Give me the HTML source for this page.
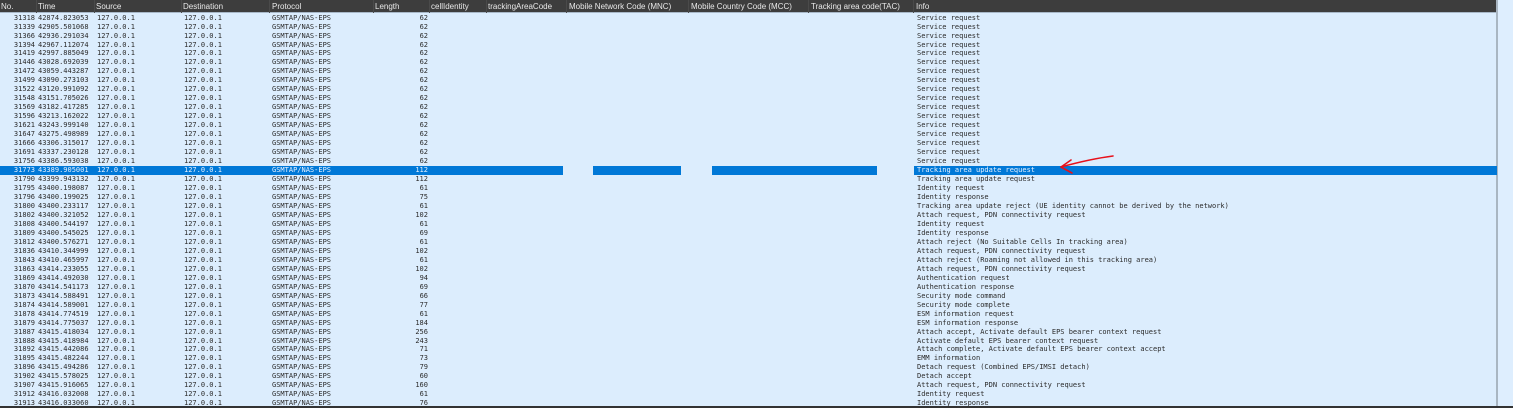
<!DOCTYPE html>
<html><head><meta charset="utf-8"><style>
*{margin:0;padding:0;box-sizing:border-box}
body{width:1513px;height:408px;overflow:hidden;background:#dcedfd;position:relative;font-family:"DejaVu Sans Mono","Liberation Mono",monospace;}
#hd{position:absolute;left:0;top:0;width:1497px;height:13px;background:#3d3d3d;border-bottom:1px solid #a8b8c8;font-family:"Liberation Sans",sans-serif;font-size:8px;color:#e8e8e8}
#hd span{position:absolute;top:2px;line-height:9px;white-space:nowrap}
#hd i{position:absolute;top:0;width:1px;height:13px;background:#4a4a4a}
#sb{position:absolute;left:1496px;top:0;width:2px;height:408px;background:#a9b6c2}
#sr{position:absolute;left:1498px;top:0;width:15px;height:408px;background:#deeefe}
#bt{position:absolute;left:0;top:406px;width:1513px;height:2px;background:#333}
.r{position:absolute;left:0;width:1497px;height:9px;font-size:7px;line-height:9px;color:#2b2b2b;white-space:pre}
.r span{position:absolute;top:0}
.a{right:1462px;text-align:right}
.b{left:38px}.c{left:97px}.d{left:184px}.e{left:272px}
.f{right:1069px;text-align:right}
.g{left:917px}
.sel .bl{position:absolute;top:0;height:9px;background:#0078d7}
.sel{color:#e8f2ff}
</style></head><body>
<div id="hd">
<span style="left:1px">No.</span><i style="left:36px"></i>
<span style="left:38px">Time</span><i style="left:94px"></i>
<span style="left:96px">Source</span><i style="left:181px"></i>
<span style="left:183px">Destination</span><i style="left:269px"></i>
<span style="left:272px">Protocol</span><i style="left:373px"></i>
<span style="left:375px">Length</span><i style="left:429px"></i>
<span style="left:431px">cellIdentity</span><i style="left:486px"></i>
<span style="left:488px">trackingAreaCode</span><i style="left:566px"></i>
<span style="left:569px">Mobile Network Code (MNC)</span><i style="left:688px"></i>
<span style="left:691px">Mobile Country Code (MCC)</span><i style="left:808px"></i>
<span style="left:811px">Tracking area code(TAC)</span><i style="left:913px"></i>
<span style="left:916px">Info</span>
</div>
<div id="sb"></div><div id="sr"></div>

<div class="r" style="top:13.6px"><span class="a">31318</span><span class="b">42874.823053</span><span class="c">127.0.0.1</span><span class="d">127.0.0.1</span><span class="e">GSMTAP/NAS-EPS</span><span class="f">62</span><span class="g">Service request</span></div>
<div class="r" style="top:22.57px"><span class="a">31339</span><span class="b">42905.501068</span><span class="c">127.0.0.1</span><span class="d">127.0.0.1</span><span class="e">GSMTAP/NAS-EPS</span><span class="f">62</span><span class="g">Service request</span></div>
<div class="r" style="top:31.54px"><span class="a">31366</span><span class="b">42936.291034</span><span class="c">127.0.0.1</span><span class="d">127.0.0.1</span><span class="e">GSMTAP/NAS-EPS</span><span class="f">62</span><span class="g">Service request</span></div>
<div class="r" style="top:40.51px"><span class="a">31394</span><span class="b">42967.112074</span><span class="c">127.0.0.1</span><span class="d">127.0.0.1</span><span class="e">GSMTAP/NAS-EPS</span><span class="f">62</span><span class="g">Service request</span></div>
<div class="r" style="top:49.48px"><span class="a">31419</span><span class="b">42997.885049</span><span class="c">127.0.0.1</span><span class="d">127.0.0.1</span><span class="e">GSMTAP/NAS-EPS</span><span class="f">62</span><span class="g">Service request</span></div>
<div class="r" style="top:58.45px"><span class="a">31446</span><span class="b">43028.692039</span><span class="c">127.0.0.1</span><span class="d">127.0.0.1</span><span class="e">GSMTAP/NAS-EPS</span><span class="f">62</span><span class="g">Service request</span></div>
<div class="r" style="top:67.42px"><span class="a">31472</span><span class="b">43059.443287</span><span class="c">127.0.0.1</span><span class="d">127.0.0.1</span><span class="e">GSMTAP/NAS-EPS</span><span class="f">62</span><span class="g">Service request</span></div>
<div class="r" style="top:76.39px"><span class="a">31499</span><span class="b">43090.273103</span><span class="c">127.0.0.1</span><span class="d">127.0.0.1</span><span class="e">GSMTAP/NAS-EPS</span><span class="f">62</span><span class="g">Service request</span></div>
<div class="r" style="top:85.36px"><span class="a">31522</span><span class="b">43120.991092</span><span class="c">127.0.0.1</span><span class="d">127.0.0.1</span><span class="e">GSMTAP/NAS-EPS</span><span class="f">62</span><span class="g">Service request</span></div>
<div class="r" style="top:94.33px"><span class="a">31548</span><span class="b">43151.705026</span><span class="c">127.0.0.1</span><span class="d">127.0.0.1</span><span class="e">GSMTAP/NAS-EPS</span><span class="f">62</span><span class="g">Service request</span></div>
<div class="r" style="top:103.3px"><span class="a">31569</span><span class="b">43182.417285</span><span class="c">127.0.0.1</span><span class="d">127.0.0.1</span><span class="e">GSMTAP/NAS-EPS</span><span class="f">62</span><span class="g">Service request</span></div>
<div class="r" style="top:112.27px"><span class="a">31596</span><span class="b">43213.162022</span><span class="c">127.0.0.1</span><span class="d">127.0.0.1</span><span class="e">GSMTAP/NAS-EPS</span><span class="f">62</span><span class="g">Service request</span></div>
<div class="r" style="top:121.24px"><span class="a">31621</span><span class="b">43243.999140</span><span class="c">127.0.0.1</span><span class="d">127.0.0.1</span><span class="e">GSMTAP/NAS-EPS</span><span class="f">62</span><span class="g">Service request</span></div>
<div class="r" style="top:130.21px"><span class="a">31647</span><span class="b">43275.498989</span><span class="c">127.0.0.1</span><span class="d">127.0.0.1</span><span class="e">GSMTAP/NAS-EPS</span><span class="f">62</span><span class="g">Service request</span></div>
<div class="r" style="top:139.18px"><span class="a">31666</span><span class="b">43306.315017</span><span class="c">127.0.0.1</span><span class="d">127.0.0.1</span><span class="e">GSMTAP/NAS-EPS</span><span class="f">62</span><span class="g">Service request</span></div>
<div class="r" style="top:148.15px"><span class="a">31691</span><span class="b">43337.230128</span><span class="c">127.0.0.1</span><span class="d">127.0.0.1</span><span class="e">GSMTAP/NAS-EPS</span><span class="f">62</span><span class="g">Service request</span></div>
<div class="r" style="top:157.12px"><span class="a">31756</span><span class="b">43386.593038</span><span class="c">127.0.0.1</span><span class="d">127.0.0.1</span><span class="e">GSMTAP/NAS-EPS</span><span class="f">62</span><span class="g">Service request</span></div>
<div class="r sel" style="top:166.09px"><div class="bl" style="left:0;width:563px"></div><div class="bl" style="left:593px;width:88px"></div><div class="bl" style="left:712px;width:165px"></div><div class="bl" style="left:914px;width:583px"></div><span class="a">31773</span><span class="b">43389.905001</span><span class="c">127.0.0.1</span><span class="d">127.0.0.1</span><span class="e">GSMTAP/NAS-EPS</span><span class="f">112</span><span class="g">Tracking area update request</span></div>
<div class="r" style="top:175.06px"><span class="a">31790</span><span class="b">43399.943132</span><span class="c">127.0.0.1</span><span class="d">127.0.0.1</span><span class="e">GSMTAP/NAS-EPS</span><span class="f">112</span><span class="g">Tracking area update request</span></div>
<div class="r" style="top:184.03px"><span class="a">31795</span><span class="b">43400.198087</span><span class="c">127.0.0.1</span><span class="d">127.0.0.1</span><span class="e">GSMTAP/NAS-EPS</span><span class="f">61</span><span class="g">Identity request</span></div>
<div class="r" style="top:193px"><span class="a">31796</span><span class="b">43400.199025</span><span class="c">127.0.0.1</span><span class="d">127.0.0.1</span><span class="e">GSMTAP/NAS-EPS</span><span class="f">75</span><span class="g">Identity response</span></div>
<div class="r" style="top:201.97px"><span class="a">31800</span><span class="b">43400.233117</span><span class="c">127.0.0.1</span><span class="d">127.0.0.1</span><span class="e">GSMTAP/NAS-EPS</span><span class="f">61</span><span class="g">Tracking area update reject (UE identity cannot be derived by the network)</span></div>
<div class="r" style="top:210.94px"><span class="a">31802</span><span class="b">43400.321052</span><span class="c">127.0.0.1</span><span class="d">127.0.0.1</span><span class="e">GSMTAP/NAS-EPS</span><span class="f">102</span><span class="g">Attach request, PDN connectivity request</span></div>
<div class="r" style="top:219.91px"><span class="a">31808</span><span class="b">43400.544197</span><span class="c">127.0.0.1</span><span class="d">127.0.0.1</span><span class="e">GSMTAP/NAS-EPS</span><span class="f">61</span><span class="g">Identity request</span></div>
<div class="r" style="top:228.88px"><span class="a">31809</span><span class="b">43400.545025</span><span class="c">127.0.0.1</span><span class="d">127.0.0.1</span><span class="e">GSMTAP/NAS-EPS</span><span class="f">69</span><span class="g">Identity response</span></div>
<div class="r" style="top:237.85px"><span class="a">31812</span><span class="b">43400.576271</span><span class="c">127.0.0.1</span><span class="d">127.0.0.1</span><span class="e">GSMTAP/NAS-EPS</span><span class="f">61</span><span class="g">Attach reject (No Suitable Cells In tracking area)</span></div>
<div class="r" style="top:246.82px"><span class="a">31836</span><span class="b">43410.344999</span><span class="c">127.0.0.1</span><span class="d">127.0.0.1</span><span class="e">GSMTAP/NAS-EPS</span><span class="f">102</span><span class="g">Attach request, PDN connectivity request</span></div>
<div class="r" style="top:255.79px"><span class="a">31843</span><span class="b">43410.465997</span><span class="c">127.0.0.1</span><span class="d">127.0.0.1</span><span class="e">GSMTAP/NAS-EPS</span><span class="f">61</span><span class="g">Attach reject (Roaming not allowed in this tracking area)</span></div>
<div class="r" style="top:264.76px"><span class="a">31863</span><span class="b">43414.233055</span><span class="c">127.0.0.1</span><span class="d">127.0.0.1</span><span class="e">GSMTAP/NAS-EPS</span><span class="f">102</span><span class="g">Attach request, PDN connectivity request</span></div>
<div class="r" style="top:273.73px"><span class="a">31869</span><span class="b">43414.492030</span><span class="c">127.0.0.1</span><span class="d">127.0.0.1</span><span class="e">GSMTAP/NAS-EPS</span><span class="f">94</span><span class="g">Authentication request</span></div>
<div class="r" style="top:282.7px"><span class="a">31870</span><span class="b">43414.541173</span><span class="c">127.0.0.1</span><span class="d">127.0.0.1</span><span class="e">GSMTAP/NAS-EPS</span><span class="f">69</span><span class="g">Authentication response</span></div>
<div class="r" style="top:291.67px"><span class="a">31873</span><span class="b">43414.588491</span><span class="c">127.0.0.1</span><span class="d">127.0.0.1</span><span class="e">GSMTAP/NAS-EPS</span><span class="f">66</span><span class="g">Security mode command</span></div>
<div class="r" style="top:300.64px"><span class="a">31874</span><span class="b">43414.589001</span><span class="c">127.0.0.1</span><span class="d">127.0.0.1</span><span class="e">GSMTAP/NAS-EPS</span><span class="f">77</span><span class="g">Security mode complete</span></div>
<div class="r" style="top:309.61px"><span class="a">31878</span><span class="b">43414.774519</span><span class="c">127.0.0.1</span><span class="d">127.0.0.1</span><span class="e">GSMTAP/NAS-EPS</span><span class="f">61</span><span class="g">ESM information request</span></div>
<div class="r" style="top:318.58px"><span class="a">31879</span><span class="b">43414.775037</span><span class="c">127.0.0.1</span><span class="d">127.0.0.1</span><span class="e">GSMTAP/NAS-EPS</span><span class="f">184</span><span class="g">ESM information response</span></div>
<div class="r" style="top:327.55px"><span class="a">31887</span><span class="b">43415.418034</span><span class="c">127.0.0.1</span><span class="d">127.0.0.1</span><span class="e">GSMTAP/NAS-EPS</span><span class="f">256</span><span class="g">Attach accept, Activate default EPS bearer context request</span></div>
<div class="r" style="top:336.52px"><span class="a">31888</span><span class="b">43415.418984</span><span class="c">127.0.0.1</span><span class="d">127.0.0.1</span><span class="e">GSMTAP/NAS-EPS</span><span class="f">243</span><span class="g">Activate default EPS bearer context request</span></div>
<div class="r" style="top:345.49px"><span class="a">31892</span><span class="b">43415.442086</span><span class="c">127.0.0.1</span><span class="d">127.0.0.1</span><span class="e">GSMTAP/NAS-EPS</span><span class="f">71</span><span class="g">Attach complete, Activate default EPS bearer context accept</span></div>
<div class="r" style="top:354.46px"><span class="a">31895</span><span class="b">43415.482244</span><span class="c">127.0.0.1</span><span class="d">127.0.0.1</span><span class="e">GSMTAP/NAS-EPS</span><span class="f">73</span><span class="g">EMM information</span></div>
<div class="r" style="top:363.43px"><span class="a">31896</span><span class="b">43415.494286</span><span class="c">127.0.0.1</span><span class="d">127.0.0.1</span><span class="e">GSMTAP/NAS-EPS</span><span class="f">79</span><span class="g">Detach request (Combined EPS/IMSI detach)</span></div>
<div class="r" style="top:372.4px"><span class="a">31902</span><span class="b">43415.578025</span><span class="c">127.0.0.1</span><span class="d">127.0.0.1</span><span class="e">GSMTAP/NAS-EPS</span><span class="f">60</span><span class="g">Detach accept</span></div>
<div class="r" style="top:381.37px"><span class="a">31907</span><span class="b">43415.916065</span><span class="c">127.0.0.1</span><span class="d">127.0.0.1</span><span class="e">GSMTAP/NAS-EPS</span><span class="f">160</span><span class="g">Attach request, PDN connectivity request</span></div>
<div class="r" style="top:390.34px"><span class="a">31912</span><span class="b">43416.032008</span><span class="c">127.0.0.1</span><span class="d">127.0.0.1</span><span class="e">GSMTAP/NAS-EPS</span><span class="f">61</span><span class="g">Identity request</span></div>
<div class="r" style="top:399.31px"><span class="a">31913</span><span class="b">43416.033060</span><span class="c">127.0.0.1</span><span class="d">127.0.0.1</span><span class="e">GSMTAP/NAS-EPS</span><span class="f">76</span><span class="g">Identity response</span></div>
<div id="bt"></div>
<svg style="position:absolute;left:0;top:0" width="1513" height="408"><g fill="none" stroke="#e8101a" stroke-width="1.6" stroke-linecap="round" stroke-linejoin="round"><path d="M1113 156 Q1090 159 1061 167"/><path d="M1071 160 L1061 167 L1072 173"/></g></svg>
</body></html>
